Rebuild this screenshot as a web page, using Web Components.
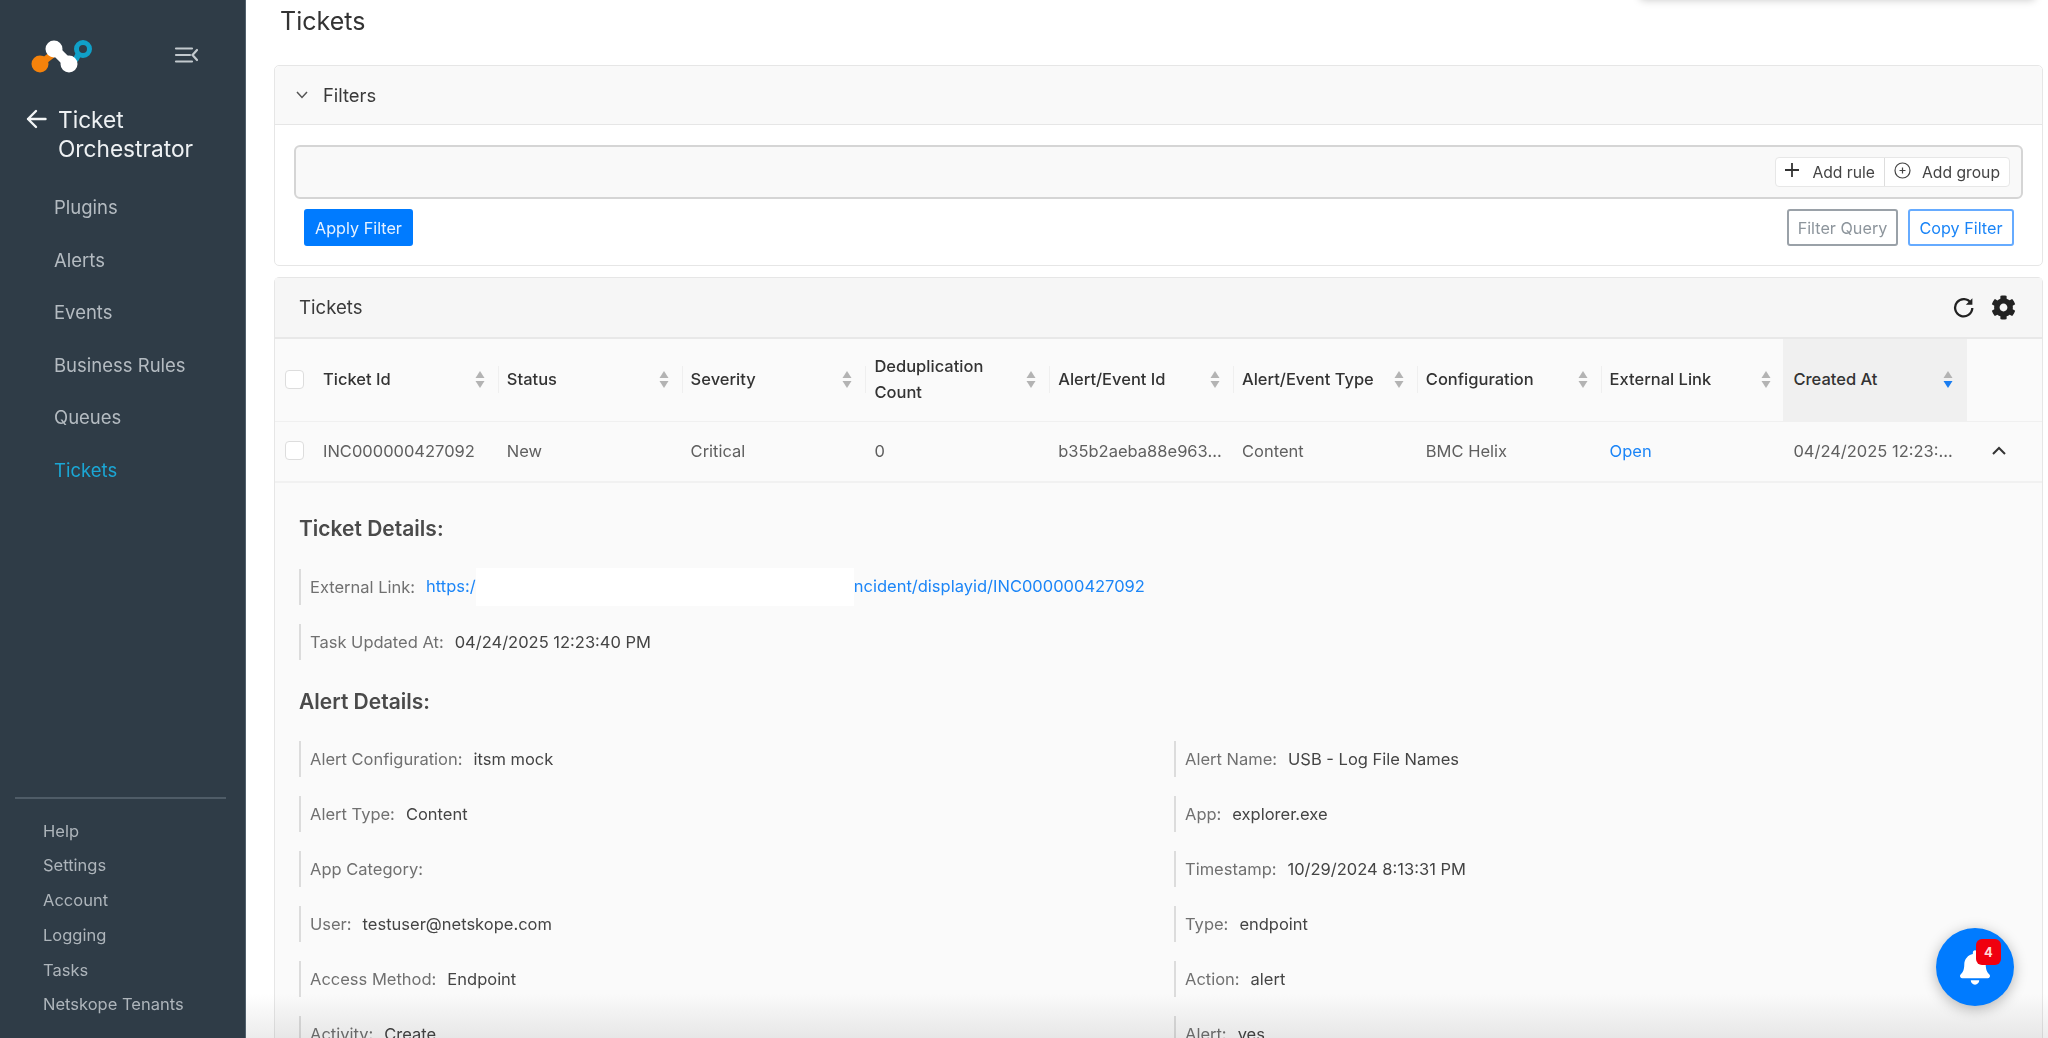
<!DOCTYPE html>
<html lang="en">
<head>
<meta charset="utf-8">
<title>Tickets</title>
<style>
html,body{margin:0;padding:0;height:100%;overflow:hidden;background:#fff}
body{font-family:Inter,"Liberation Sans",sans-serif}
</style>
</head>
<body>
<ticket-app>
  <side-bar slot="side">
    <nav-link>Plugins</nav-link>
    <nav-link>Alerts</nav-link>
    <nav-link>Events</nav-link>
    <nav-link>Business Rules</nav-link>
    <nav-link>Queues</nav-link>
    <nav-link active>Tickets</nav-link>
    <nav-link slot="foot" small>Help</nav-link>
    <nav-link slot="foot" small>Settings</nav-link>
    <nav-link slot="foot" small>Account</nav-link>
    <nav-link slot="foot" small>Logging</nav-link>
    <nav-link slot="foot" small>Tasks</nav-link>
    <nav-link slot="foot" small>Netskope Tenants</nav-link>
  </side-bar>
  <page-title>Tickets</page-title>
  <filter-card></filter-card>
  <ticket-card></ticket-card>
</ticket-app>
<notify-fab count="4"></notify-fab>

<script>
// sidebar + main column
class TicketApp extends HTMLElement{
    constructor(){
        super()
        this._shadowRoot=this.attachShadow({mode:'open'})
    }
    connectedCallback(){
        this._shadowRoot.innerHTML=`
            <style>
            :host{display:flex;height:1038px;overflow:hidden;position:relative;filter:blur(.4px)}
            main{flex:1;min-width:0;padding:0 5px 0 28px;overflow:hidden}
            .fade{position:absolute;left:246px;right:0;bottom:0;height:44px;pointer-events:none;mix-blend-mode:multiply;
                background:linear-gradient(#fff,#ececec)}
            .toast{position:absolute;left:1640px;width:395px;top:-30px;height:30px;border-radius:4px;
                box-shadow:0 0 8px rgba(0,0,0,.22)}
            </style>
            <slot name="side"></slot>
            <main><slot></slot></main>
            <div class="fade"></div>
            <div class="toast"></div>
        `
    }
}
customElements.define('ticket-app',TicketApp)

class SideBar extends HTMLElement{
    constructor(){
        super()
        this._shadowRoot=this.attachShadow({mode:'open'})
    }
    connectedCallback(){
        this._shadowRoot.innerHTML=`
            <style>
            :host{display:flex;flex-direction:column;flex:none;width:246px;height:1038px;box-sizing:border-box;
                background:#2f3c47;border-right:1px solid #52616d;color:#eef1f3}
            .top{display:flex;align-items:center;justify-content:space-between;height:52px;margin-top:29px;padding:0 47px 0 30px}
            .back{display:flex;margin-top:24px;padding-left:26px;font-size:22.7px;line-height:29px}
            .back svg{flex:none;margin:4px 11px 0 0}
            nav{display:flex;flex-direction:column;margin-top:18px;padding-left:54px;gap:0}
            .grow{flex:1}
            hr{border:0;height:2px;background:#4f5c67;margin:0 19px 0 15px}
            .foot{display:flex;flex-direction:column;padding:15px 0 16px 43px}
            </style>
            <div class="top">
                <svg width="64" height="40" viewBox="0 0 64 40" fill="none" stroke-linecap="round">
                    <path d="M10 29 L23 19" stroke="#f5820b" stroke-width="7"/>
                    <circle cx="10" cy="29" r="8.5" fill="#f5820b"/>
                    <path d="M46 24 L51 14" stroke="#10a0c8" stroke-width="6"/>
                    <circle cx="53" cy="14" r="6.5" fill="#2f3c47" stroke="#10a0c8" stroke-width="5"/>
                    <path d="M24 14 L39 29" stroke="#fff" stroke-width="10"/>
                    <circle cx="24" cy="14" r="8.5" fill="#fff"/>
                    <circle cx="39" cy="29" r="8.5" fill="#fff"/>
                </svg>
                <svg width="24" height="18" viewBox="0 0 24 18" fill="none" stroke="#c3c9ce" stroke-width="2.2" stroke-linecap="round">
                    <path d="M2 2.5H18M2 9H16M2 15.5H18M23 4l-4.5 5 4.5 5"/>
                </svg>
            </div>
            <div class="back">
                <svg width="21" height="20" viewBox="0 0 21 20" fill="none" stroke="#f3f5f6" stroke-width="2.4" stroke-linecap="round" stroke-linejoin="round">
                    <path d="M19.5 10H2M10 2l-8 8 8 8"/>
                </svg>
                <div>Ticket<br>Orchestrator</div>
            </div>
            <nav><slot></slot></nav>
            <div class="grow"></div>
            <hr>
            <div class="foot"><slot name="foot"></slot></div>
        `
    }
}
customElements.define('side-bar',SideBar)

class NavLink extends HTMLElement{
    constructor(){
        super()
        this._shadowRoot=this.attachShadow({mode:'open'})
    }
    connectedCallback(){
        this._shadowRoot.innerHTML=`
            <style>
            :host{display:block;font-size:18.5px;line-height:52.5px;color:#b4bbc1}
            :host([active]){color:#1ba6d4}
            :host([small]){font-size:16.5px;line-height:34.7px;color:#aeb5bb}
            </style>
            <slot></slot>
        `
    }
}
customElements.define('nav-link',NavLink)

class PageTitle extends HTMLElement{
    constructor(){
        super()
        this._shadowRoot=this.attachShadow({mode:'open'})
    }
    connectedCallback(){
        this._shadowRoot.innerHTML=`
            <style>
            :host{display:block;height:65px;padding-left:6px;box-sizing:border-box;font-size:25px;line-height:43px;color:#333}
            </style>
            <slot></slot>
        `
    }
}
customElements.define('page-title',PageTitle)

class UiBtn extends HTMLElement{
    constructor(){
        super()
        this._shadowRoot=this.attachShadow({mode:'open'})
    }
    connectedCallback(){
        this._shadowRoot.innerHTML=`
            <style>
            :host{display:inline-flex;align-items:center;justify-content:center;box-sizing:border-box;height:37px;
                padding:0;white-space:nowrap;border-radius:3px;font-size:16.2px;border:2px solid #9aa1a8;color:#8d959c;background:#fff}
            :host([variant=primary]){background:#007bff;border-color:#007bff;color:#e6f1ff;width:109px}
            :host([variant=outline]){border-color:#66abff;color:#1b85f7;width:106px}
            :host([variant=muted]){width:111px}
            </style>
            <slot></slot>
        `
    }
}
customElements.define('ui-btn',UiBtn)

class FilterCard extends HTMLElement{
    constructor(){
        super()
        this._shadowRoot=this.attachShadow({mode:'open'})
    }
    connectedCallback(){
        this._shadowRoot.innerHTML=`
            <style>
            :host{display:block;box-sizing:border-box;height:201px;margin-bottom:11px;border:1px solid #e6e6e6;border-radius:5px;background:#fff}
            header{display:flex;align-items:center;box-sizing:border-box;height:59px;padding-left:21px;gap:15px;
                background:#f9f9f9;border-bottom:1px solid #e6e6e6;border-radius:5px 5px 0 0;font-size:18.4px;color:#3a3a3a}
            .builder{display:flex;align-items:center;justify-content:flex-end;box-sizing:border-box;height:54px;margin:20px 19px 10px;
                padding-right:11px;background:#f9f9f9;border:2px solid #d5d5d5;border-radius:6px}
            .group{display:flex;height:28px;background:#fff;border:1px solid #e7e7e7;border-radius:4px;font-size:15.7px;color:#444}
            .group span{display:flex;align-items:center;gap:13px;padding:0 9px}
            .group span+span{border-left:1px solid #ddd;gap:11px}
            .group svg{margin-top:-4px}
            .row{display:flex;justify-content:space-between;padding:0 28px 0 29px}
            .right{display:flex;gap:10px}
            </style>
            <header>
                <svg width="12" height="8" viewBox="0 0 12 8" fill="none" stroke="#555" stroke-width="1.5"><path d="M1 1l5 5.5L11 1"/></svg>
                <span>Filters</span>
            </header>
            <div class="builder">
                <div class="group">
                    <span><svg width="14" height="14" viewBox="0 0 14 14" stroke="#333" stroke-width="1.8"><path d="M7 0v14M0 7h14"/></svg>Add rule</span>
                    <span><svg width="17" height="17" viewBox="0 0 17 17" fill="none" stroke="#444" stroke-width="1.2"><circle cx="8.5" cy="8.5" r="7.5"/><path d="M8.5 5.5v6M5.5 8.5h6"/></svg>Add group</span>
                </div>
            </div>
            <div class="row">
                <ui-btn variant="primary">Apply Filter</ui-btn>
                <div class="right">
                    <ui-btn variant="muted">Filter Query</ui-btn>
                    <ui-btn variant="outline">Copy Filter</ui-btn>
                </div>
            </div>
        `
    }
}
customElements.define('filter-card',FilterCard)

class SortHead extends HTMLElement{
    constructor(){
        super()
        this._shadowRoot=this.attachShadow({mode:'open'})
    }
    connectedCallback(){
        const active=this.hasAttribute('active')
        this._shadowRoot.innerHTML=`
            <style>
            :host{display:flex;align-items:center;box-sizing:border-box;padding:0 14px 2px 8px;position:relative;
                font-size:16.5px;font-weight:500;line-height:26.5px;color:#333}
            :host([active]){background:#f0f0f0;margin-left:-2px;padding-left:10px;margin-right:2px}
            :host::after{content:'';position:absolute;right:0;top:27px;height:27px;width:1px;background:#efefef}
            :host([active])::after{display:none}
            div{flex:1}
            svg{flex:none}
            </style>
            <div><slot></slot></div>
            <svg width="10" height="17" viewBox="0 0 10 17">
                <path d="M5 0l4.5 7H.5z" fill="#b3b3b3"/>
                <path d="M5 17L.5 10h9z" fill="${active?'#1a7df0':'#b3b3b3'}"/>
            </svg>
        `
    }
}
customElements.define('sort-head',SortHead)

class CheckBox extends HTMLElement{
    constructor(){
        super()
        this._shadowRoot=this.attachShadow({mode:'open'})
    }
    connectedCallback(){
        this._shadowRoot.innerHTML=`
            <style>
            :host{display:flex;align-items:center;padding:0 0 2px 10px}
            i{display:block;box-sizing:border-box;width:19px;height:19px;background:#fff;border:1px solid #ddd;border-radius:4px}
            </style>
            <i></i>
        `
    }
}
customElements.define('check-box',CheckBox)

class DetailItem extends HTMLElement{
    constructor(){
        super()
        this._shadowRoot=this.attachShadow({mode:'open'})
    }
    connectedCallback(){
        this._shadowRoot.innerHTML=`
            <style>
            :host{display:flex;align-items:center;box-sizing:border-box;height:36px;padding-left:9px;gap:11px;
                border-left:2px solid #dcdcdc;font-size:16.5px;color:#444;white-space:nowrap}
            span{color:#707070}
            </style>
            <span>${this.getAttribute('label')}</span>
            <div><slot></slot></div>
        `
    }
}
customElements.define('detail-item',DetailItem)

const heads=['Ticket Id','Status','Severity','Deduplication Count','Alert/Event Id','Alert/Event Type','Configuration','External Link','Created At']
const cells=['INC000000427092','New','Critical','0','b35b2aeba88e963...','Content','BMC Helix','Open','04/24/2025 12:23:...']
const alertRows=[
    ['Alert Configuration:','itsm mock'],['Alert Name:','USB - Log File Names'],
    ['Alert Type:','Content'],['App:','explorer.exe'],
    ['App Category:',''],['Timestamp:','10/29/2024 8:13:31 PM'],
    ['User:','testuser@netskope.com'],['Type:','endpoint'],
    ['Access Method:','Endpoint'],['Action:','alert'],
    ['Activity:','Create'],['Alert:','yes'],
]

class TicketCard extends HTMLElement{
    constructor(){
        super()
        this._shadowRoot=this.attachShadow({mode:'open'})
    }
    connectedCallback(){
        const headHtml=heads.map((h,i)=>`<sort-head ${i==8?'active':''}>${h}</sort-head>`).join('')
        const cellHtml=cells.map(c=>`<div class="cell ${c=='Open'?'link':''}">${c}</div>`).join('')
        const alertHtml=alertRows.map(r=>`<detail-item label="${r[0]}">${r[1]}</detail-item>`).join('')
        this._shadowRoot.innerHTML=`
            <style>
            :host{display:block;box-sizing:border-box;border:1px solid #e6e6e6;border-radius:5px 5px 0 0;background:#fafafa}
            header{display:flex;align-items:center;justify-content:space-between;box-sizing:border-box;height:61px;padding:0 26px 1px 24px;
                background:#f6f6f6;border-bottom:2px solid #e8e8e8;font-size:18.6px;color:#3a3a3a}
            .tools{display:flex;align-items:center;gap:17px}
            .grid{display:grid;grid-template-columns:40px repeat(9,183.8px) 1fr}
            .head{height:83px;border-bottom:1px solid #f0f0f0}
            .row{height:61px;border-bottom:2px solid #f1f1f1}
            .head,.row{box-sizing:border-box}
            .cell{display:flex;align-items:center;padding:0 0 2px 8px;font-size:16.5px;color:#5f5f5f;white-space:nowrap}
            .link{color:#1b85f7}
            .toggle{display:flex;align-items:center;padding:0 0 2px 23px}
            .detail{padding:0 0 0 24px}
            h3{margin:0;font-size:21px;font-weight:600;line-height:24px;color:#4a4a4a}
            .tk{display:flex;flex-direction:column;gap:19px}
            a{color:#1b85f7;text-decoration:none}
            .mask{display:inline-block;width:378px;height:38px;background:#fff;vertical-align:middle}
            .alerts{display:grid;grid-template-columns:875px 1fr;row-gap:19px}
            </style>
            <header>
                <span>Tickets</span>
                <div class="tools">
                    <svg width="21" height="21" viewBox="0 0 21 21" fill="none" stroke="#222" stroke-width="2.3">
                        <path d="M18 6.2A8.6 8.6 0 1 0 19.3 11"/>
                        <path d="M19.4 1.2v6.6h-6.6z" fill="#222" stroke="none"/>
                    </svg>
                    <svg width="25" height="25" viewBox="0 0 512 512"><path fill="#222" d="M487.4 315.7l-42.6-24.6c4.3-23.2 4.3-47 0-70.2l42.6-24.6c4.9-2.8 7.1-8.6 5.5-14-11.1-35.6-30-67.8-54.7-94.6-3.8-4.1-10-5.1-14.8-2.3L380.8 110c-17.9-15.4-38.5-27.3-60.8-35.1V25.8c0-5.6-3.9-10.5-9.4-11.7-36.7-8.2-74.3-7.8-109.2 0-5.5 1.2-9.4 6.1-9.4 11.7V75c-22.2 7.9-42.8 19.8-60.8 35.1L88.7 85.5c-4.9-2.8-11-1.9-14.8 2.3-24.7 26.7-43.6 58.9-54.7 94.6-1.7 5.4.6 11.2 5.5 14L67.3 221c-4.3 23.2-4.3 47 0 70.2l-42.6 24.6c-4.9 2.8-7.1 8.6-5.5 14 11.1 35.6 30 67.8 54.7 94.6 3.8 4.1 10 5.1 14.8 2.3l42.6-24.6c17.9 15.4 38.5 27.3 60.8 35.1v49.2c0 5.6 3.9 10.5 9.4 11.7 36.7 8.2 74.3 7.8 109.2 0 5.5-1.2 9.4-6.1 9.4-11.7v-49.2c22.2-7.9 42.8-19.8 60.8-35.1l42.6 24.6c4.9 2.8 11 1.9 14.8-2.3 24.7-26.7 43.6-58.9 54.7-94.6 1.5-5.5-.7-11.3-5.6-14.1zM256 336c-44.1 0-80-35.9-80-80s35.9-80 80-80 80 35.9 80 80-35.9 80-80 80z"/></svg>
                </div>
            </header>
            <div class="grid head">
                <check-box></check-box>
                ${headHtml}
                <div></div>
            </div>
            <div class="grid row">
                <check-box></check-box>
                ${cellHtml}
                <div class="toggle"><svg width="14" height="9" viewBox="0 0 14 9" fill="none" stroke="#333" stroke-width="2"><path d="M1 8l6-6 6 6"/></svg></div>
            </div>
            <div class="detail">
                <h3 style="margin:34px 0 28px">Ticket Details:</h3>
                <div class="tk">
                    <detail-item label="External Link:"><a href="#">https:/<span class="mask"></span>ncident/displayid/INC000000427092</a></detail-item>
                    <detail-item label="Task Updated At:">04/24/2025 12:23:40 PM</detail-item>
                </div>
                <h3 style="margin:30px 0 27px">Alert Details:</h3>
                <div class="alerts">${alertHtml}</div>
            </div>
        `
    }
}
customElements.define('ticket-card',TicketCard)

class NotifyFab extends HTMLElement{
    constructor(){
        super()
        this._shadowRoot=this.attachShadow({mode:'open'})
    }
    connectedCallback(){
        this._shadowRoot.innerHTML=`
            <style>
            :host{position:fixed;left:1936px;top:928px;width:78px;height:78px;border-radius:50%;background:#007bff;
                display:flex;align-items:center;justify-content:center;box-shadow:0 3px 14px rgba(0,0,0,.28)}
            svg{margin-right:1px}
            b{position:absolute;left:40px;top:11px;width:25px;height:26px;border-radius:6px;background:#f0000f;color:#ffd9d9;
                font-size:13px;font-weight:700;display:flex;align-items:center;justify-content:center}
            </style>
            <svg width="30" height="35" viewBox="0 0 448 512"><path fill="#fff" d="M224 512c35.32 0 63.97-28.65 63.97-64H160.03c0 35.35 28.65 64 63.97 64zm215.39-149.71c-19.32-20.76-55.47-51.99-55.47-154.29 0-77.7-54.48-139.9-127.94-155.16V32c0-17.67-14.32-32-31.98-32s-31.98 14.33-31.98 32v20.84C118.56 68.1 64.08 130.3 64.08 208c0 102.3-36.15 133.53-55.47 154.29-6 6.45-8.66 14.16-8.61 21.71.11 16.4 12.98 32 32.1 32h383.8c19.12 0 32-15.6 32.1-32 .05-7.55-2.61-15.27-8.61-21.71z"/></svg>
            <b>${this.getAttribute('count')}</b>
        `
    }
}
customElements.define('notify-fab',NotifyFab)
</script>
</body>
</html>
